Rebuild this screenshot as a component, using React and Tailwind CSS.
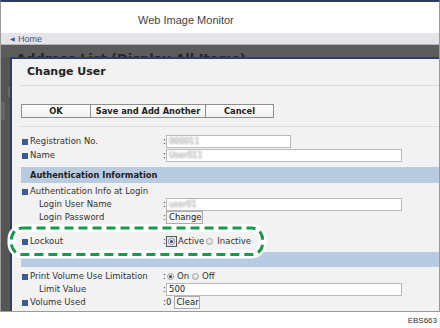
import React from "react";

const F = "font-['DejaVu_Sans',Verdana,sans-serif]";

function Bullet() {
  return <span className="ml-[2px] mr-[2px] inline-block w-[6px] h-[6px] bg-[#3e5c91] shrink-0" />;
}

function Row({ label, bullet = false, indent = false, children, className = "" }) {
  return (
    <div className={`flex items-center h-[13px] ${className}`}>
      <div className={`flex items-center w-[143px] shrink-0 ${indent ? "pl-[19px]" : ""}`}>
        {bullet && <Bullet />}
        <span className="text-[8.5px] leading-[13px] text-[#333] whitespace-nowrap">{label}</span>
      </div>
      <span className="w-[3px] text-[8.5px] leading-[13px] text-[#333]">:</span>
      <div className="flex items-center h-[13px]">{children}</div>
    </div>
  );
}

function Input({ w, children }) {
  return (
    <div className={`${w} h-[13px] border border-[#b9b9b9] bg-white flex items-center pl-[2px] text-[8.5px] text-[#222] overflow-hidden`}>
      {children}
    </div>
  );
}

function Radio({ checked }) {
  return (
    <span className="flex items-center justify-center w-[7px] h-[7px] rounded-full border border-[#a0a0a0] bg-gradient-to-b from-[#f4f4f4] to-[#d9d9d9] shrink-0">
      {checked && <span className="w-[3px] h-[3px] rounded-full bg-[#4a4a4a]" />}
    </span>
  );
}

function Blur({ children }) {
  return <span className="blur-[1.2px] text-[#888] text-[8px]">{children}</span>;
}

export default function App() {
  return (
    <div className={`relative w-[440px] h-[328px] bg-white overflow-hidden ${F}`}>
      <div className="flex flex-col h-[312px] border-t-2 border-t-[#2d3b5e] border-x border-x-[#9a9a9a] border-b border-b-[#9a9a9a]">
        {/* header */}
        <div className="h-[31px] bg-white flex items-center pl-[137px] pt-[5px] font-['Liberation_Sans',Arial,sans-serif] text-[11px] text-[#444]">
          Web Image Monitor
        </div>
        <div className="h-[11px] bg-[#e4e4e9] flex items-center pl-[9px] pt-[2px] font-['Liberation_Sans',Arial,sans-serif] text-[9px] leading-[9px] text-[#3b5b8c]">
          <span className="text-[6px] mr-[3px]">◀</span>
          <span>Home</span>
        </div>
        <div className="h-px bg-[#b5b5b5]" />
        {/* dark overlay area */}
        <div className="flex-1 flex flex-col bg-[#5c5c5c] min-h-0">
          <div className="h-[12px] overflow-hidden pl-[15px]">
            <div className="pt-[7px] text-[13px] leading-[13px] font-bold text-[#262626] whitespace-nowrap">
              Address List (Display All Items)
            </div>
          </div>
          <div className="flex-1 flex min-h-0">
            <div className="w-[9px] bg-[#555] flex flex-col">
              <div className="h-[30px]" />
              <div className="ml-[7px] w-[2px] h-[10px] bg-[#6a6a6a]" />
              <div className="h-[5px]" />
              <div className="w-[4px] h-[18px] bg-[#676767]" />
            </div>
            <div className="flex-1 border-l-2 border-t-2 border-[#2e3d63] bg-[#f2f2f2] overflow-hidden pl-[8px] flex flex-col">
              <div className="h-[26px] flex items-center pl-[7px] text-[11px] font-bold text-[#222]">Change User</div>
              <div className="h-px bg-[#d9d9d9]" />
              <div className="mt-[18px] ml-[1px] flex h-[14px] text-[8.3px] font-bold text-[#222]">
                <div className="w-[70px] flex items-center justify-center border border-[#8e8e8e] bg-gradient-to-b from-white to-[#f0f0f0]">OK</div>
                <div className="w-[116px] -ml-px flex items-center justify-center border border-[#8e8e8e] bg-gradient-to-b from-white to-[#f0f0f0]">Save and Add Another</div>
                <div className="w-[69px] -ml-px flex items-center justify-center border border-[#8e8e8e] bg-gradient-to-b from-white to-[#f0f0f0]">Cancel</div>
              </div>
              <div className="mt-[8px] h-px bg-[#dcdcdc]" />
              <div className="mt-[8px] flex flex-col">
                <Row label="Registration No." bullet>
                  <Input w="w-[125px]"><Blur>000011</Blur></Input>
                </Row>
                <Row label="Name" bullet className="mt-[1px]">
                  <Input w="w-[236px]"><Blur>User011</Blur></Input>
                </Row>
                <div className="mt-[5px] ml-[1px] h-[16px] bg-[#b9cbe0] flex items-center pl-[9px] text-[8.3px] font-bold text-[#222]">
                  Authentication Information
                </div>
                <Row label="Authentication Info at Login" bullet className="mt-[2px] [&>span]:invisible">
                </Row>
                <Row label="Login User Name" indent>
                  <Input w="w-[236px]"><Blur>user01</Blur></Input>
                </Row>
                <Row label="Login Password" indent>
                  <div className="w-[37px] h-[13px] border border-[#ababab] bg-[#f5f5f5] flex items-center pl-[2px] text-[8.5px] text-[#222]">Change</div>
                </Row>
                <Row label="Lockout" bullet className="mt-[11px]">
                  <span className="w-[11px] h-[11px] border border-[#5a5a5a] bg-[#e3e8f0] flex items-center justify-center">
                    <span className="flex items-center justify-center w-[7px] h-[7px] rounded-full border border-[#7d8aa3] bg-white">
                      <span className="w-[3px] h-[3px] rounded-full bg-[#2d3f6a]" />
                    </span>
                  </span>
                  <span className="ml-[1px] text-[8.5px] text-[#333]">Active</span>
                  <span className="ml-[2px] flex"><Radio /></span>
                  <span className="ml-[4px] text-[8.5px] text-[#333]">Inactive</span>
                </Row>
                <div className="mt-[4px] ml-[1px] h-[15px] bg-[#b9cbe0]" />
                <Row label="Print Volume Use Limitation" bullet className="mt-[3px]">
                  <span className="ml-[1px] flex"><Radio checked /></span>
                  <span className="ml-[3px] text-[8.5px] text-[#333]">On</span>
                  <span className="ml-[3px] flex"><Radio /></span>
                  <span className="ml-[3px] text-[8.5px] text-[#333]">Off</span>
                </Row>
                <Row label="Limit Value" indent>
                  <Input w="w-[236px]">500</Input>
                </Row>
                <Row label="Volume Used" bullet>
                  <span className="text-[8.5px] text-[#333]">0</span>
                  <div className="ml-[3px] w-[26px] h-[13px] border border-[#ababab] bg-[#f5f5f5] flex items-center pl-[1px] text-[8.5px] text-[#222]">Clear</div>
                </Row>
              </div>
            </div>
          </div>
        </div>
      </div>
      <div className="flex justify-end pr-[3px] pt-[4px] font-['Liberation_Sans',Arial,sans-serif] text-[8px] leading-[10px] text-[#333]">
        EBS663
      </div>
      <svg className="absolute left-[6px] top-[222px]" width="262" height="40" viewBox="0 0 262 40">
        <rect x="5.5" y="6" width="251" height="26.5" rx="11" fill="none" stroke="#ffffff" strokeWidth="8" />
        <rect x="5.5" y="6" width="251" height="26.5" rx="11" fill="none" stroke="#17994a" strokeWidth="3" strokeDasharray="9 5" />
      </svg>
    </div>
  );
}
